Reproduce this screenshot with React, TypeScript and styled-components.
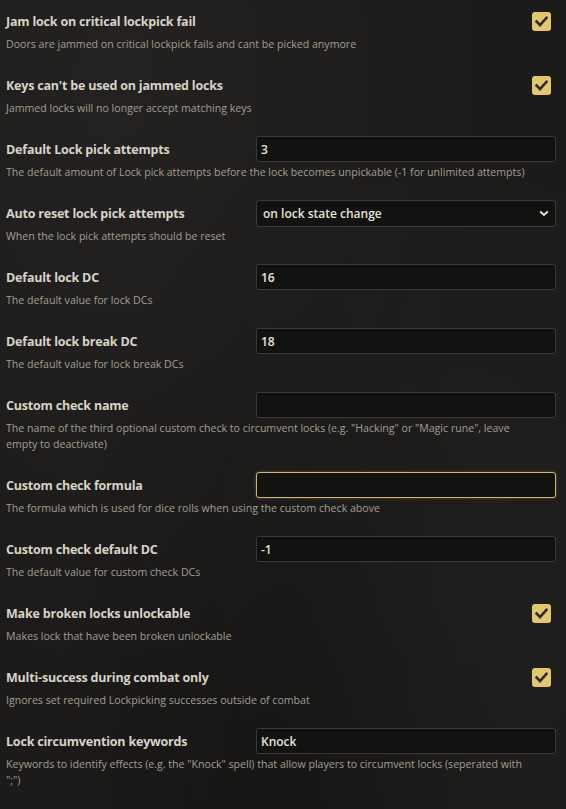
import React from "react";
import styled, { createGlobalStyle } from "styled-components";

const Global = createGlobalStyle`
  html, body { margin: 0; padding: 0; }
  body {
    background-color: #1c1b1a;
    background-image:
      radial-gradient(ellipse at 20% 10%, rgba(255,255,255,0.03), transparent 60%),
      radial-gradient(ellipse at 80% 70%, rgba(255,255,255,0.02), transparent 55%),
      radial-gradient(ellipse at 50% 100%, rgba(0,0,0,0.25), transparent 60%);
    min-height: 809px;
    font-family: "Open Sans", "Noto Sans", sans-serif;
  }
`;

const Page = styled.div`
  padding: 8px 0 0 0;
  display: flex;
  flex-direction: column;
`;

const Row = styled.div`
  display: flex;
  flex-direction: column;
  padding: 0 10px 20px 6px;
`;

const Header = styled.div`
  display: flex;
  align-items: center;
  height: 26px;
`;

const Label = styled.label`
  flex: 1;
  font-size: 12.5px;
  font-weight: 700;
  color: #d8d3c6;
  letter-spacing: -0.2px;
`;

const Field = styled.div<{ $check?: boolean }>`
  width: 300px;
  display: flex;
  justify-content: ${(p) => (p.$check ? "flex-end" : "stretch")};
`;

const TextInput = styled.input<{ $focus?: boolean }>`
  box-sizing: border-box;
  width: 100%;
  height: 26px;
  background: #121211;
  border: 1px solid ${(p) => (p.$focus ? "#cdb56f" : "#3b3a38")};
  border-radius: 3px;
  box-shadow: ${(p) => (p.$focus ? "0 0 3px rgba(205,181,111,0.4)" : "inset 0 0 2px rgba(0,0,0,0.6)")};
  color: #e6e2d6;
  font-family: inherit;
  font-size: 12px;
  font-weight: 600;
  padding: 0 4px;
  outline: none;
`;

const SelectWrap = styled.div`
  position: relative;
  width: 100%;
`;

const Select = styled.div`
  box-sizing: border-box;
  width: 100%;
  height: 27px;
  background: #121211;
  border: 1px solid #3b3a38;
  border-radius: 3px;
  color: #e6e2d6;
  font-size: 12px;
  font-weight: 600;
  padding: 0 6px;
  display: flex;
  align-items: center;
  justify-content: space-between;
`;

const CheckBox = styled.span`
  width: 19px;
  height: 19px;
  border-radius: 3px;
  background: #e2c772;
  display: flex;
  align-items: center;
  justify-content: center;
  margin-right: 5px;
`;

const Hint = styled.p`
  margin: 2px 0 0 0;
  max-width: 520px;
  font-size: 10.6px;
  line-height: 16px;
  color: #a39e92;
`;

type Item =
  | { kind: "check"; label: string; hint: string }
  | { kind: "text"; label: string; hint: string; value: string; focus?: boolean }
  | { kind: "select"; label: string; hint: string; value: string };

const items: Item[] = [
  { kind: "check", label: "Jam lock on critical lockpick fail", hint: "Doors are jammed on critical lockpick fails and cant be picked anymore" },
  { kind: "check", label: "Keys can't be used on jammed locks", hint: "Jammed locks will no longer accept matching keys" },
  { kind: "text", label: "Default Lock pick attempts", value: "3", hint: "The default amount of Lock pick attempts before the lock becomes unpickable (-1 for unlimited attempts)" },
  { kind: "select", label: "Auto reset lock pick attempts", value: "on lock state change", hint: "When the lock pick attempts should be reset" },
  { kind: "text", label: "Default lock DC", value: "16", hint: "The default value for lock DCs" },
  { kind: "text", label: "Default lock break DC", value: "18", hint: "The default value for lock break DCs" },
  { kind: "text", label: "Custom check name", value: "", hint: "The name of the third optional custom check to circumvent locks (e.g. \"Hacking\" or \"Magic rune\", leave empty to deactivate)" },
  { kind: "text", label: "Custom check formula", value: "", focus: true, hint: "The formula which is used for dice rolls when using the custom check above" },
  { kind: "text", label: "Custom check default DC", value: "-1", hint: "The default value for custom check DCs" },
  { kind: "check", label: "Make broken locks unlockable", hint: "Makes lock that have been broken unlockable" },
  { kind: "check", label: "Multi-success during combat only", hint: "Ignores set required Lockpicking successes outside of combat" },
  { kind: "text", label: "Lock circumvention keywords", value: "Knock", hint: "Keywords to identify effects (e.g. the \"Knock\" spell) that allow players to circumvent locks (seperated with \";\")" },
];

const Check = () => (
  <svg width="13" height="11" viewBox="0 0 13 11">
    <path d="M1.5 5.5 L5 9 L11.5 1.8" fill="none" stroke="#2e2c28" strokeWidth="2.6" strokeLinecap="square" />
  </svg>
);

const Chevron = () => (
  <svg width="10" height="7" viewBox="0 0 10 7">
    <path d="M1.2 1.5 L5 5 L8.8 1.5" fill="none" stroke="#e6e2d6" strokeWidth="2" />
  </svg>
);

export default function App() {
  return (
    <>
      <Global />
      <Page>
        {items.map((it, i) => (
          <Row key={i}>
            <Header>
              <Label>{it.label}</Label>
              <Field $check={it.kind === "check"}>
                {it.kind === "check" && (
                  <CheckBox>
                    <Check />
                  </CheckBox>
                )}
                {it.kind === "text" && <TextInput readOnly value={it.value} $focus={it.focus} />}
                {it.kind === "select" && (
                  <SelectWrap>
                    <Select>
                      <span>{it.value}</span>
                      <Chevron />
                    </Select>
                  </SelectWrap>
                )}
              </Field>
            </Header>
            <Hint>{it.hint}</Hint>
          </Row>
        ))}
      </Page>
    </>
  );
}
